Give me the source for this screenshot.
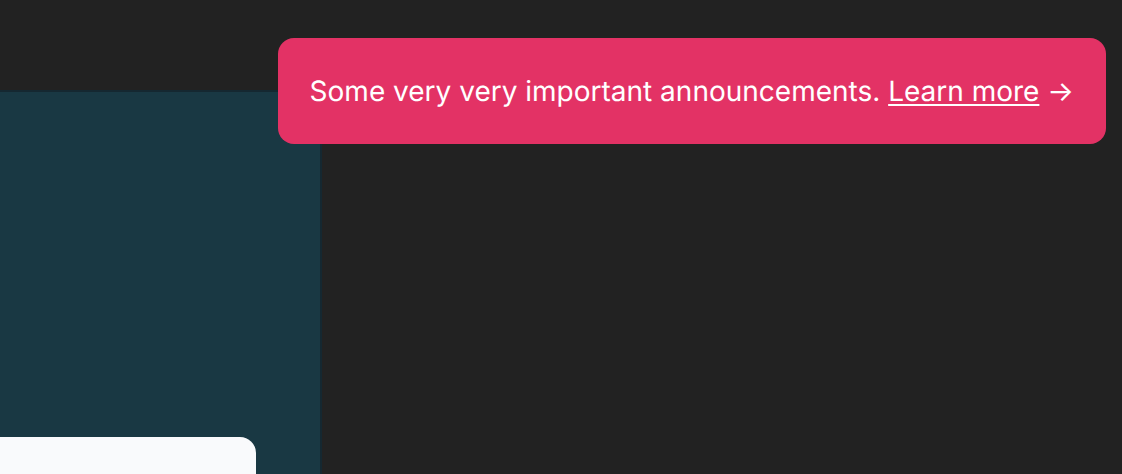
<div class="page">
  <main class="panel">
    <section class="card"></section>
  </main>
  <aside class="announcement">
    <p>Some very very important announcements. <a href="#learn-more">Learn more</a> →</p>
  </aside>
</div>

<style>
  :global(body) {
    background: #222222;
  }

  .page {
    position: relative;
    box-sizing: border-box;
    min-height: 100vh;
    padding-top: 90px;
    display: flex;
    overflow: hidden;
    font-family: Inter, "Liberation Sans", sans-serif;
    text-rendering: geometricPrecision;
  }

  .panel {
    box-sizing: border-box;
    flex: 0 0 322px;
    display: flex;
    flex-direction: column;
    padding: 345px 64px 0 0;
    border: solid #152831;
    border-width: 2px 2px 0 0;
    background: #193843;
  }

  .card {
    flex: 1;
    min-height: 37px;
    border-top-right-radius: 16px;
    background: #f9fafc;
  }

  .announcement {
    position: absolute;
    top: 38px;
    right: 16px;
    padding: 32px;
    border-radius: 16px;
    background: #e33265;
    color: #ffffff;
  }

  p {
    margin: 0;
    font-size: 28px;
    line-height: 42px;
    white-space: nowrap;
  }

  a {
    color: inherit;
    text-decoration: underline;
    text-decoration-thickness: 2px;
    text-underline-offset: 3px;
  }
</style>
